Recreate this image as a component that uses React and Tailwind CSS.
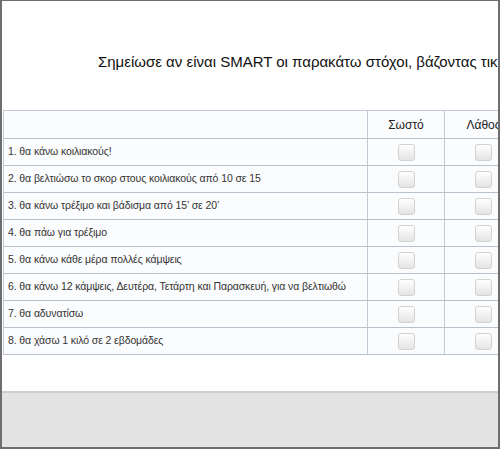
import React from 'react';

const goals = [
  '1. θα κάνω κοιλιακούς!',
  '2. θα βελτιώσω το σκορ στους κοιλιακούς από 10 σε 15',
  '3. θα κάνω τρέξιμο και βάδισμα από 15’ σε 20’',
  '4. θα πάω για τρέξιμο',
  '5. θα κάνω κάθε μέρα πολλές κάμψεις',
  '6. θα κάνω 12 κάμψεις, Δευτέρα, Τετάρτη και Παρασκευή, για να βελτιωθώ',
  '7. θα αδυνατίσω',
  '8. θα χάσω 1 κιλό σε 2 εβδομάδες',
];

const Box = () => (
  <span className="block w-[17px] h-[17px] rounded-[3px] border border-[#d2d2d2] bg-linear-to-b from-white to-[#e4e4e4]" />
);

export default function App() {
  return (
    <div
      className="w-[500px] h-[449px] border-2 border-t border-[#6e6e6e] bg-white flex flex-col overflow-hidden"
      style={{ fontFamily: '"Liberation Sans", Arial, sans-serif' }}
    >
      {/* white area */}
      <div className="h-[390px] overflow-hidden">
        <div className="pt-[51px] pl-[96px] h-[109px] whitespace-nowrap text-[15px] leading-[20px] text-[#111]">
          Σημείωσε αν είναι SMART οι παρακάτω στόχοι, βάζοντας τικ
        </div>

        <div className="ml-px w-[520px] border-l border-t border-[#c3cad5] bg-[#fbfcfe]">
          {/* header */}
          <div className="grid grid-cols-[364px_77px_77px] h-[28px] border-b border-[#b9c1cd]">
            <div className="border-r border-[#c3cad5]" />
            <div className="border-r border-[#c3cad5] flex items-center justify-center text-[12px] text-[#222]">Σωστό</div>
            <div className="flex items-center justify-center text-[12px] text-[#222]">Λάθος</div>
          </div>

          {goals.map((g) => (
            <div key={g} className="grid grid-cols-[364px_77px_77px] h-[27px] border-b border-[#b9c1cd]">
              <div className="border-r border-[#c3cad5] flex items-center pl-[4px] text-[10.5px] tracking-[-0.1px] text-[#333] whitespace-nowrap overflow-hidden">
                {g}
              </div>
              <div className="border-r border-[#c3cad5] flex items-center justify-center">
                <Box />
              </div>
              <div className="flex items-center justify-center">
                <Box />
              </div>
            </div>
          ))}
        </div>
      </div>

      {/* gray footer */}
      <div className="flex-1 bg-[#e3e3e3] border-t-2 border-[#cdcdcd]" />
    </div>
  );
}
